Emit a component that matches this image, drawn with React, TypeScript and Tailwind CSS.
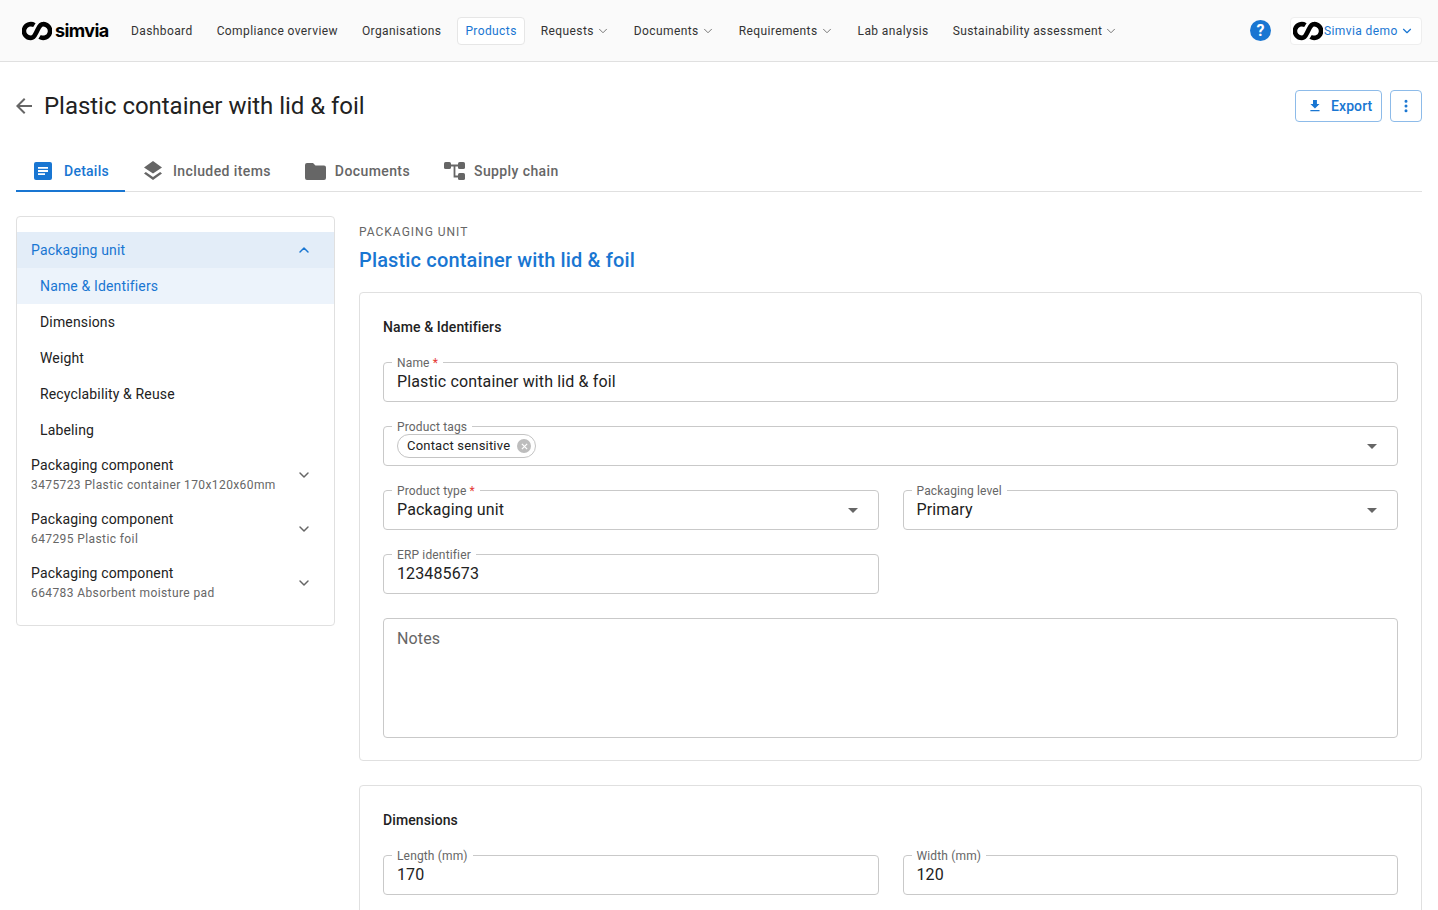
import { ChevronDown, ChevronUp, EllipsisVertical } from 'lucide-react'
import { ReactNode } from 'react'

function SimviaMark({ className }: { className: string }) {
  return (
    <svg viewBox="0 0 30 20" className={className} fill="none" stroke="currentColor" strokeWidth="4.6">
      <path d="M12.4 4.1 A6.9 6.9 0 1 0 9 16.9 C12.5 16.9 13.5 12.5 15 10 C16.5 7.5 17.5 3.1 21 3.1 A6.9 6.9 0 1 1 17.6 15.9" />
    </svg>
  )
}

function NavItem({ label, menu, active }: { label: string; menu?: boolean; active?: boolean }) {
  return (
    <div
      className={`flex h-[28px] items-center rounded px-2 tracking-[0.4px] ${
        active ? 'border border-[#e6e6e6] bg-white px-[7px] text-[#1976d2]' : 'text-[#333]'
      }`}
    >
      {label}
      {menu && <ChevronDown className="ml-[2px] h-[14px] w-[14px] text-[#666]" strokeWidth={1.5} />}
    </div>
  )
}

function Tab({ icon, label, active }: { icon: ReactNode; label: string; active?: boolean }) {
  return (
    <div
      className={`-mb-px flex h-[38px] items-center border-b-[2px] pr-[16px] pb-[2px] pl-[18px] text-[14px] font-medium ${
        active ? 'border-[#1976d2] tracking-[0.25px] text-[#1976d2]' : 'border-transparent tracking-[0.4px] text-[#666]'
      }`}
    >
      {icon}
      {label}
    </div>
  )
}

function Field({ label, required, value, select }: { label: string; required?: boolean; value?: ReactNode; select?: boolean }) {
  return (
    <div className="relative flex h-[40px] items-center rounded border border-[#c9c9c9] pr-[20px] pl-[13px] text-[16px] tracking-[0.13px] text-[#222]">
      <span className="absolute -top-[7px] left-[8px] bg-white px-[5px] text-[12px] leading-[14px] tracking-[0.15px] text-[#666]">
        {label}
        {required && <span className="text-[#e53935]"> *</span>}
      </span>
      <div className="flex-1">{value}</div>
      {select && (
        <svg viewBox="0 0 10 5" className="h-[5px] w-[10px] fill-[#666]">
          <path d="M0 0 L10 0 L5 5 Z" />
        </svg>
      )}
    </div>
  )
}

function SideComponent({ title, sub }: { title: string; sub: string }) {
  return (
    <div className="flex h-[54px] items-center justify-between pr-[22px] pl-[14px]">
      <div className="pb-[2px]">
        <div className="text-[14px] leading-[20px] tracking-[0.15px] text-[#222]">{title}</div>
        <div className="mt-[1px] text-[12px] leading-[18px] tracking-[0.4px] text-[#666]">{sub}</div>
      </div>
      <ChevronDown className="h-[16px] w-[16px] text-[#666]" strokeWidth={2.2} />
    </div>
  )
}

export default function App() {
  return (
    <div className="h-screen overflow-hidden bg-white font-['Roboto',sans-serif] text-[#222]">
      <header className="flex h-[62px] items-center border-b border-[#e0e0e0] bg-[#fafafa] pr-[16px] pl-[22px] text-[12px]">
        <div className="flex w-[93px] items-center text-black">
          <SimviaMark className="h-[20px] w-[30px]" />
          <span className="ml-[3px] font-['Inter',sans-serif] text-[18px] font-bold tracking-[-0.6px]">simvia</span>
        </div>
        <nav className="ml-[8px] flex items-center gap-[8px]">
          <NavItem label="Dashboard" />
          <NavItem label="Compliance overview" />
          <NavItem label="Organisations" />
          <NavItem label="Products" active />
          <NavItem label="Requests" menu />
          <NavItem label="Documents" menu />
          <NavItem label="Requirements" menu />
          <NavItem label="Lab analysis" />
          <NavItem label="Sustainability assessment" menu />
        </nav>
        <div className="ml-auto flex items-center gap-[19px]">
          <div className="flex h-[21px] w-[21px] items-center justify-center rounded-full bg-[#1976d2] text-[16px] leading-none font-bold text-white">?</div>
          <div className="flex h-[28px] w-[132px] items-center rounded border border-[#eeeeee] bg-white pl-[2px] tracking-[0.4px] text-[#1976d2]">
            <SimviaMark className="h-[20px] w-[30px] text-black" />
            <span className="ml-[1px]">Simvia demo</span>
            <ChevronDown className="ml-[2px] h-[14px] w-[14px]" strokeWidth={2} />
          </div>
        </div>
      </header>

      <div className="px-[16px]">
        <div className="flex h-[88px] items-center justify-between">
          <div className="flex items-center gap-[8px]">
            <svg viewBox="0 0 24 24" className="-ml-[4px] h-[24px] w-[24px] fill-[#666]">
              <path d="M20 11H7.83l5.59-5.59L12 4l-8 8 8 8 1.41-1.41L7.83 13H20v-2z" />
            </svg>
            <h1 className="text-[24px] leading-[32px] tracking-[-0.03px] text-[#222]">Plastic container with lid &amp; foil</h1>
          </div>
          <div className="flex items-center gap-[8px]">
            <button className="flex h-[32px] w-[87px] items-center gap-[9px] rounded border border-[#8dbbe9] pl-[12px] text-[14px] font-medium tracking-[0.1px] text-[#1976d2]">
              <svg viewBox="0 0 24 24" className="h-[14px] w-[14px] fill-current">
                <path d="M19 9h-4V3H9v6H5l7 7 7-7zM5 18v2h14v-2H5z" transform="translate(-1.5 -1.5) scale(1.12)" />
              </svg>
              Export
            </button>
            <button className="flex h-[32px] w-[32px] items-center justify-center rounded border border-[#8dbbe9] text-[#1976d2]">
              <EllipsisVertical className="h-[16px] w-[16px]" strokeWidth={2.5} />
            </button>
          </div>
        </div>

        <div className="mt-[4px] flex h-[38px] items-end border-b border-[#e0e0e0]">
          <Tab
            active
            label="Details"
            icon={
              <svg viewBox="0 0 18 18" className="mr-[12px] h-[18px] w-[18px]">
                <rect width="18" height="18" rx="2" fill="#1976d2" />
                <path d="M4 5h10v1.8H4zM4 8.1h10v1.8H4zM4 11.2h7V13H4z" fill="#fff" />
              </svg>
            }
          />
          <Tab
            label="Included items"
            icon={
              <svg viewBox="0 0 18 20" className="mr-[11px] ml-[1px] h-[20px] w-[18px] fill-[#666]">
                <path d="M9 12.6 0 6.6 9 0l9 6.6-9 6zm0 3.4-7.2-5L0 12.4 9 19l9-6.6-1.8-1.4L9 16z" />
              </svg>
            }
          />
          <Tab
            label="Documents"
            icon={
              <svg viewBox="0 0 21 17" className="mr-[9px] h-[17px] w-[21px] fill-[#666]">
                <path d="M2 0h6l2.5 2.5H19a2 2 0 0 1 2 2V15a2 2 0 0 1-2 2H2a2 2 0 0 1-2-2V2a2 2 0 0 1 2-2z" />
              </svg>
            }
          />
          <Tab
            label="Supply chain"
            icon={
              <svg viewBox="0 0 21 18" className="mr-[9px] h-[18px] w-[21px]">
                <path d="M6 3.5h10M10.5 3.5V14.5H15" fill="none" stroke="#666" strokeWidth="1.8" />
                <rect width="7" height="7" x="0" y="0" rx="1.6" fill="#666" />
                <rect width="7" height="7" x="14" y="0" rx="1.6" fill="#666" />
                <rect width="7" height="7" x="14" y="11" rx="1.6" fill="#666" />
              </svg>
            }
          />
        </div>

        <div className="mt-[24px] flex items-start gap-[24px]">
          <aside className="w-[319px] shrink-0 rounded border border-[#e0e0e0] py-[15px] text-[14px] tracking-[0.15px]">
            <div className="flex h-[36px] items-center justify-between bg-[#e3edf8] pr-[22px] pl-[14px] text-[#1976d2]">
              Packaging unit
              <ChevronUp className="h-[16px] w-[16px]" strokeWidth={2.2} />
            </div>
            <div className="flex h-[36px] items-center bg-[#ecf3fb] pl-[23px] text-[#1976d2]">Name &amp; Identifiers</div>
            {['Dimensions', 'Weight', 'Recyclability & Reuse', 'Labeling'].map((item) => (
              <div key={item} className="flex h-[36px] items-center pl-[23px] text-[#222]">
                {item}
              </div>
            ))}
            <SideComponent title="Packaging component" sub="3475723 Plastic container 170x120x60mm" />
            <SideComponent title="Packaging component" sub="647295 Plastic foil" />
            <SideComponent title="Packaging component" sub="664783 Absorbent moisture pad" />
          </aside>

          <main className="min-w-0 flex-1">
            <div className="mt-[8px] text-[12px] leading-[16px] tracking-[1px] text-[#666]">PACKAGING UNIT</div>
            <h2 className="mt-[6px] text-[20px] leading-[28px] font-medium tracking-[0.15px] text-[#1976d2]">Plastic container with lid &amp; foil</h2>

            <section className="mt-[18px] rounded border border-[#e0e0e0] px-[23px] pt-[23px] pb-[22px]">
              <h3 className="text-[14px] leading-[22px] font-medium tracking-[0.1px] text-[#222]">Name &amp; Identifiers</h3>
              <div className="mt-[24px] grid grid-cols-2 gap-x-[24px] gap-y-[24px]">
                <div className="col-span-2">
                  <Field label="Name" required value="Plastic container with lid & foil" />
                </div>
                <div className="col-span-2">
                  <Field
                    label="Product tags"
                    select
                    value={
                      <span className="flex h-[24px] w-[139px] items-center rounded-full border border-[#c4c4c4] pl-[9px] text-[13px] tracking-[0.2px] text-[#222]">
                        Contact sensitive
                        <span className="ml-[7px] flex h-[14px] w-[14px] items-center justify-center rounded-full bg-[#bdbdbd]">
                          <svg viewBox="0 0 8 8" className="h-[7px] w-[7px] stroke-white" strokeWidth="1.4">
                            <path d="M1 1l6 6M7 1l-6 6" />
                          </svg>
                        </span>
                      </span>
                    }
                  />
                </div>
                <Field label="Product type" required select value="Packaging unit" />
                <Field label="Packaging level" select value="Primary" />
                <Field label="ERP identifier" value="123485673" />
                <div />
                <div className="col-span-2 h-[120px] rounded border border-[#c9c9c9] pt-[8px] pl-[13px] text-[16px] tracking-[0.13px] text-[#666]">
                  Notes
                </div>
              </div>
            </section>

            <section className="mt-[24px] rounded border border-[#e0e0e0] px-[23px] pt-[23px] pb-[23px]">
              <h3 className="text-[14px] leading-[22px] font-medium tracking-[0.1px] text-[#222]">Dimensions</h3>
              <div className="mt-[24px] grid grid-cols-2 gap-[24px]">
                <Field label="Length (mm)" value="170" />
                <Field label="Width (mm)" value="120" />
              </div>
            </section>
          </main>
        </div>
      </div>
    </div>
  )
}
